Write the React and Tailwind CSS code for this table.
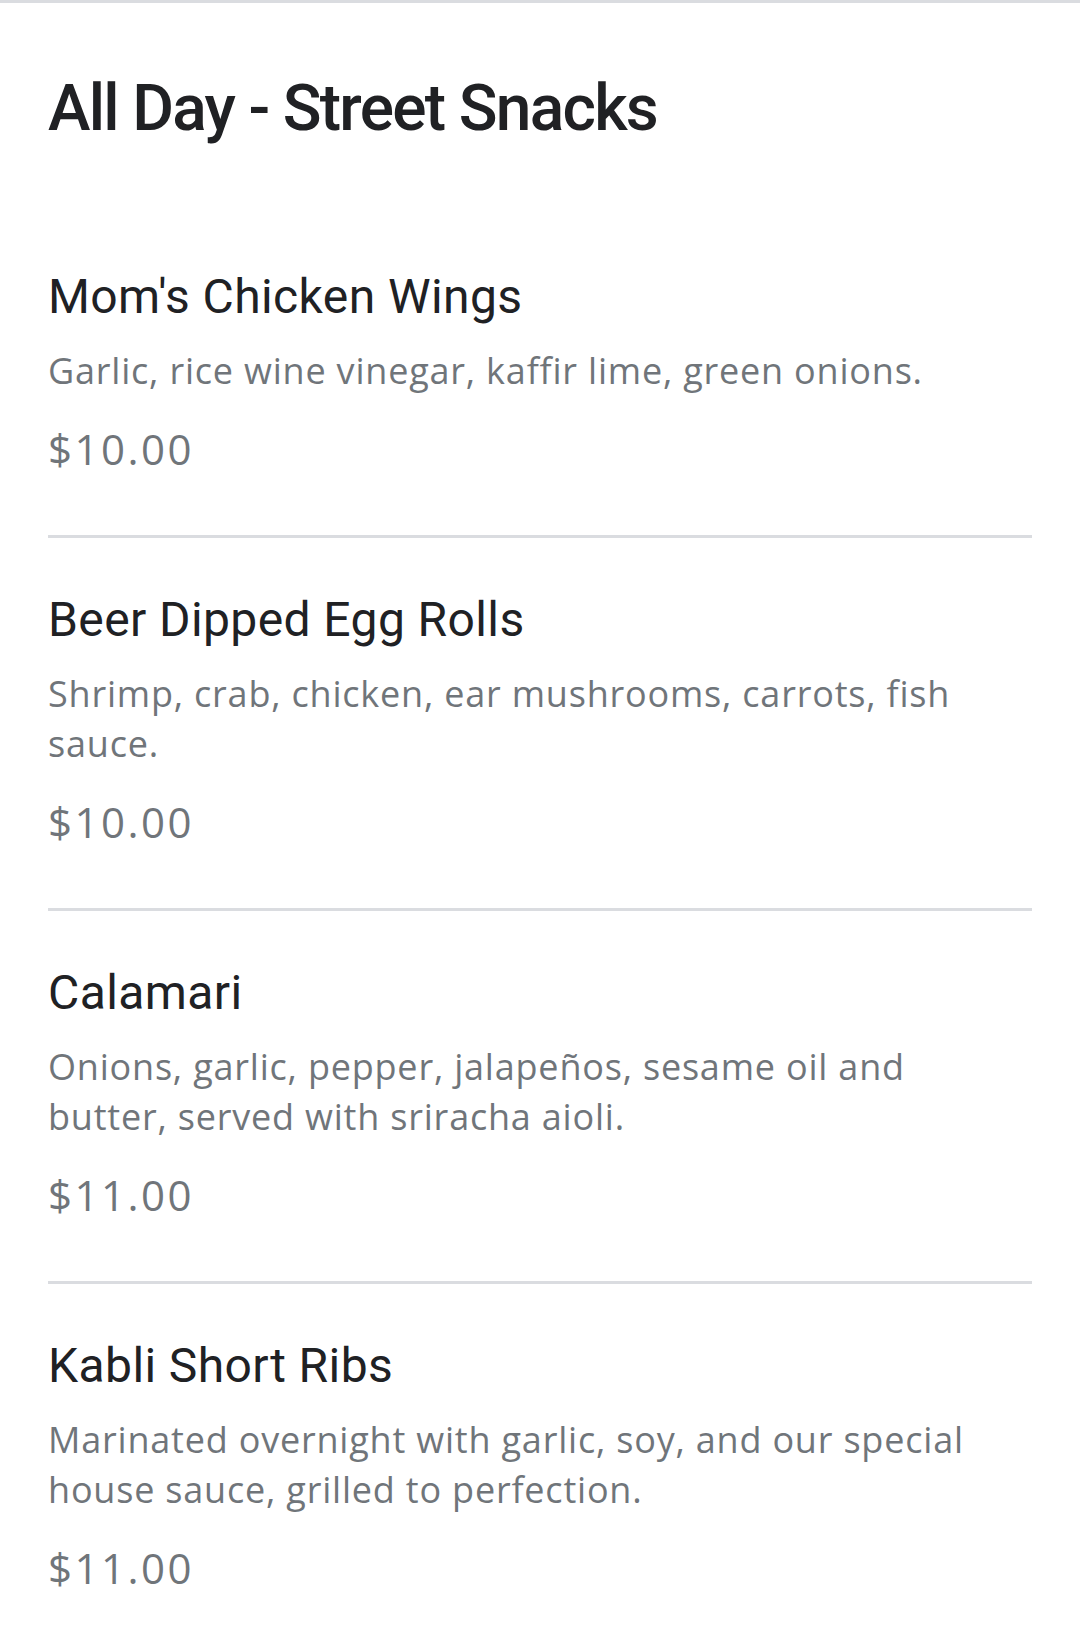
const items = [
  {
    name: "Mom's Chicken Wings",
    desc: ['Garlic, rice wine vinegar, kaffir lime, green onions.'],
    price: '$10.00',
  },
  {
    name: 'Beer Dipped Egg Rolls',
    desc: ['Shrimp, crab, chicken, ear mushrooms, carrots, fish', 'sauce.'],
    price: '$10.00',
  },
  {
    name: 'Calamari',
    desc: ['Onions, garlic, pepper, jalapeños, sesame oil and', 'butter, served with sriracha aioli.'],
    price: '$11.00',
  },
  {
    name: 'Kabli Short Ribs',
    desc: ['Marinated overnight with garlic, soy, and our special', 'house sauce, grilled to perfection.'],
    price: '$11.00',
  },
];

const body = { fontFamily: '"Open Sans", Roboto, sans-serif' };

const MenuItem = ({ item, last }) => (
  <div className={`pt-[54px] pb-[61px] ${last ? '' : 'border-b-[3px] border-[#dadce0]'}`}>
    <h3 className="text-[48px] leading-[56px] font-normal tracking-[0.4px] text-[#202124]">{item.name}</h3>
    <p className="mt-[21px] text-[36px] leading-[50px] tracking-[0.8px] text-[#70757a]" style={body}>
      {item.desc.map((line, i) => (
        <span key={i} className="block whitespace-nowrap">{line}</span>
      ))}
    </p>
    <p className="mt-[28px] text-[42px] leading-[50px] tracking-[2.5px] text-[#70757a]" style={body}>
      {item.price}
    </p>
  </div>
);

export default function App() {
  return (
    <div
      className="min-h-screen bg-white border-t-[3px] border-[#dadce0]"
      style={{ fontFamily: 'Roboto, "Noto Sans", sans-serif' }}
    >
      <div className="px-[48px]">
        {/* Section header */}
        <h2 className="pt-[68px] pb-[68px] text-[64px] leading-[76px] font-medium tracking-[-1.7px] text-[#202124]">
          All Day - Street Snacks
        </h2>

        {/* Items */}
        <div>
          {items.map((item, i) => (
            <MenuItem key={item.name} item={item} last={i === items.length - 1} />
          ))}
        </div>
      </div>
    </div>
  );
}
